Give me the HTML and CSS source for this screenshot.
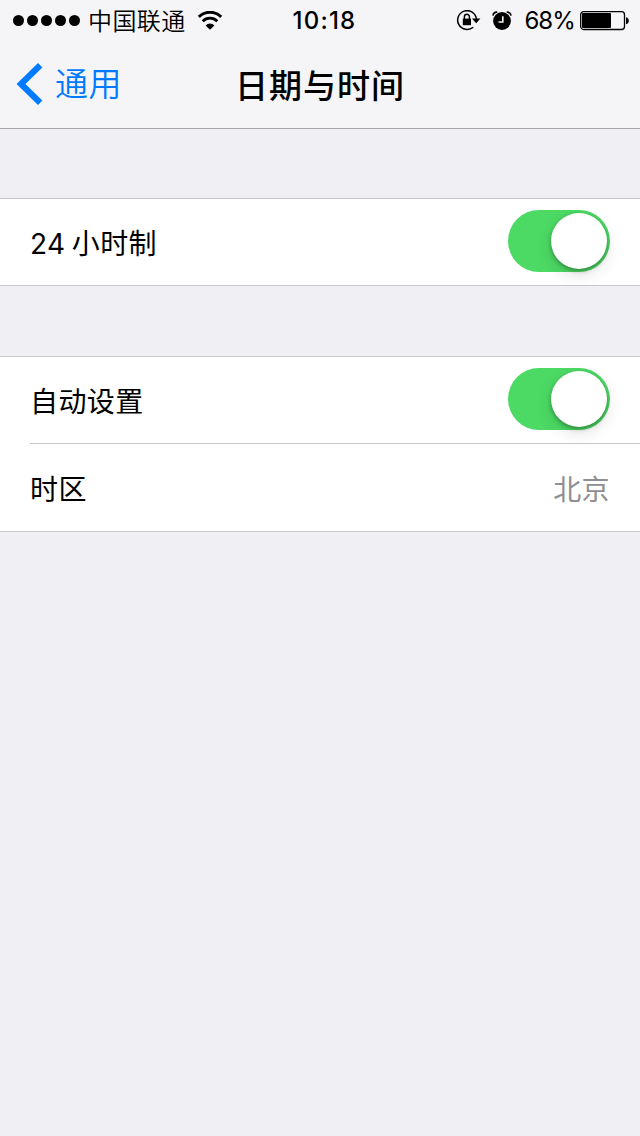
FILE: index.html
```html
<!DOCTYPE html>
<html lang="zh-CN">
<head>
    <meta charset="UTF-8">
    <meta name="viewport" content="width=device-width, initial-scale=1.0">
    <title>日期与时间</title>
    <link rel="stylesheet" href="styles.css">
</head>
<body>
    <header class="header">
        <div class="status-bar">
            <div class="status-left">
                <div class="signal">
                    <span class="dot"></span>
                    <span class="dot"></span>
                    <span class="dot"></span>
                    <span class="dot"></span>
                    <span class="dot"></span>
                </div>
                <span class="carrier">中国联通</span>
                <svg class="wifi" width="26" height="20" viewBox="0 0 26 20">
                    <path d="M1.8 5.9a15.8 15.8 0 0 1 22.4 0" fill="none" stroke="#000" stroke-width="3"/>
                    <path d="M5.7 10.2a10.3 10.3 0 0 1 14.6 0" fill="none" stroke="#000" stroke-width="2.8"/>
                    <path d="M13 18.8l-4.4-4.4a6.2 6.2 0 0 1 8.8 0z"/>
                </svg>
            </div>
            <span class="clock">10:18</span>
            <div class="status-right">
                <svg class="lock" width="25" height="22" viewBox="0 0 25 22">
                    <path d="M17.2 17.2A9.4 9.4 0 1 1 20.4 9" fill="none" stroke="#000" stroke-width="1.5"/>
                    <path d="M16 8.6h8.4l-4.2 4.6z"/>
                    <path d="M6.8 8.6h8.2v6.6H6.8z"/>
                    <path d="M8.4 9V6.8a2.5 2.5 0 0 1 5 0V9" fill="none" stroke="#000" stroke-width="1.5"/>
                </svg>
                <svg class="alarm" width="20" height="20" viewBox="0 0 20 20">
                    <circle cx="10" cy="10" r="8.9"/>
                    <path d="M1 4.6A4 4 0 0 1 5.3 1.2M19 4.6A4 4 0 0 0 14.7 1.2" fill="none" stroke="#000" stroke-width="1.6"/>
                    <path d="M10.8 5.2v5.8H6.5" fill="none" stroke="#f5f5f7" stroke-width="1.6"/>
                </svg>
                <span class="percent">68%</span>
                <svg class="battery" width="49" height="20" viewBox="0 0 49 20">
                    <rect x=".7" y=".7" width="43.8" height="17.8" rx="3" fill="none" stroke="#000" stroke-width="1.3"/>
                    <rect x="2" y="2" width="29" height="15" rx="1"/>
                    <path d="M46 6.2c1.9.5 2.8 1.8 2.8 3.5s-.9 3-2.8 3.5z"/>
                </svg>
            </div>
        </div>
        <nav class="navbar">
            <a class="back" href="#">
                <svg class="chevron" width="27" height="42" viewBox="0 0 27 42">
                    <path d="M24.2 2.2L5 21l19.2 18.8" fill="none" stroke="#007aff" stroke-width="6.2"/>
                </svg>
                <span class="back-text">通用</span>
            </a>
            <h1 class="title">日期与时间</h1>
        </nav>
    </header>

    <main class="settings">
        <section class="group">
            <div class="row">
                <span class="label">24 小时制</span>
                <span class="switch"><span class="knob"></span></span>
            </div>
        </section>
        <section class="group">
            <div class="row">
                <span class="label">自动设置</span>
                <span class="switch"><span class="knob"></span></span>
            </div>
            <div class="row row-last">
                <span class="label">时区</span>
                <span class="value">北京</span>
            </div>
        </section>
    </main>
</body>
</html>
```
FILE: styles.css
```css
* {
    box-sizing: border-box;
}

body {
    margin: 0;
    min-height: 100vh;
    background: #efeff4;
    color: #000;
    font-family: Inter, "Noto Sans CJK SC", sans-serif;
}

svg {
    display: block;
    flex-shrink: 0;
}

/* Status bar + navigation */
.header {
    height: 129px;
    background: #f5f5f7;
    border-bottom: 1px solid #a7a7aa;
}

.status-bar {
    height: 41px;
    display: grid;
    grid-template-columns: 1fr auto 1fr;
    align-items: center;
    padding: 0 11px 0 13px;
    font-size: 24px;
    line-height: 38px;
}

.status-left,
.status-right,
.signal {
    display: flex;
    align-items: center;
}

.status-right {
    justify-content: flex-end;
}

.signal {
    gap: 3px;
}

.dot {
    width: 11px;
    height: 11px;
    border-radius: 50%;
    background: #000;
}

.carrier {
    margin-left: 8px;
    padding-top: 2px;
    letter-spacing: 0.4px;
    font-weight: 350;
}

.wifi {
    margin-left: 11px;
}

.clock {
    padding: 1px 0 0 7px;
    font-weight: 550;
    letter-spacing: 1.2px;
}

.alarm {
    margin-left: 11px;
}

.percent {
    margin-left: 12px;
    padding-top: 1px;
    letter-spacing: -0.9px;
}

.battery {
    margin-left: 5px;
}

.navbar {
    height: 86px;
    display: grid;
    grid-template-columns: 1fr auto 1fr;
    align-items: center;
    padding: 0 16px;
}

.back {
    display: flex;
    align-items: center;
    gap: 12px;
    color: #007aff;
    font-size: 33px;
    font-weight: 350;
    letter-spacing: 0.4px;
    text-decoration: none;
}

.back-text {
    line-height: 48px;
}

.title {
    margin: 0;
    padding-bottom: 1px;
    font-size: 33px;
    font-weight: 500;
    letter-spacing: 1px;
}

/* Grouped list */
.settings {
    display: flex;
    flex-direction: column;
    gap: 70px;
    padding-top: 69px;
}

.group {
    background: #fff;
    border-top: 1px solid #c8c7cc;
    border-bottom: 1px solid #c8c7cc;
}

.row {
    height: 86px;
    display: flex;
    justify-content: space-between;
    padding: 11px 30px 0 0;
    margin-left: 30px;
}

.row-last {
    height: 88px;
    padding-top: 12px;
    border-top: 1px solid #c8c7cc;
}

.label,
.value {
    font-size: 28px;
    font-weight: 370;
    line-height: 69px;
    letter-spacing: 0.4px;
    word-spacing: -2px;
}

.value {
    color: #8e8e93;
}

.switch {
    width: 102px;
    height: 62px;
    padding: 3px;
    display: flex;
    justify-content: flex-end;
    border-radius: 31px;
    background: #4cd964;
}

.knob {
    width: 56px;
    height: 56px;
    border-radius: 50%;
    background: #fff;
    box-shadow: 0 2px 4px rgba(0, 0, 0, 0.3), 0 6px 16px rgba(0, 0, 0, 0.12);
}
```
